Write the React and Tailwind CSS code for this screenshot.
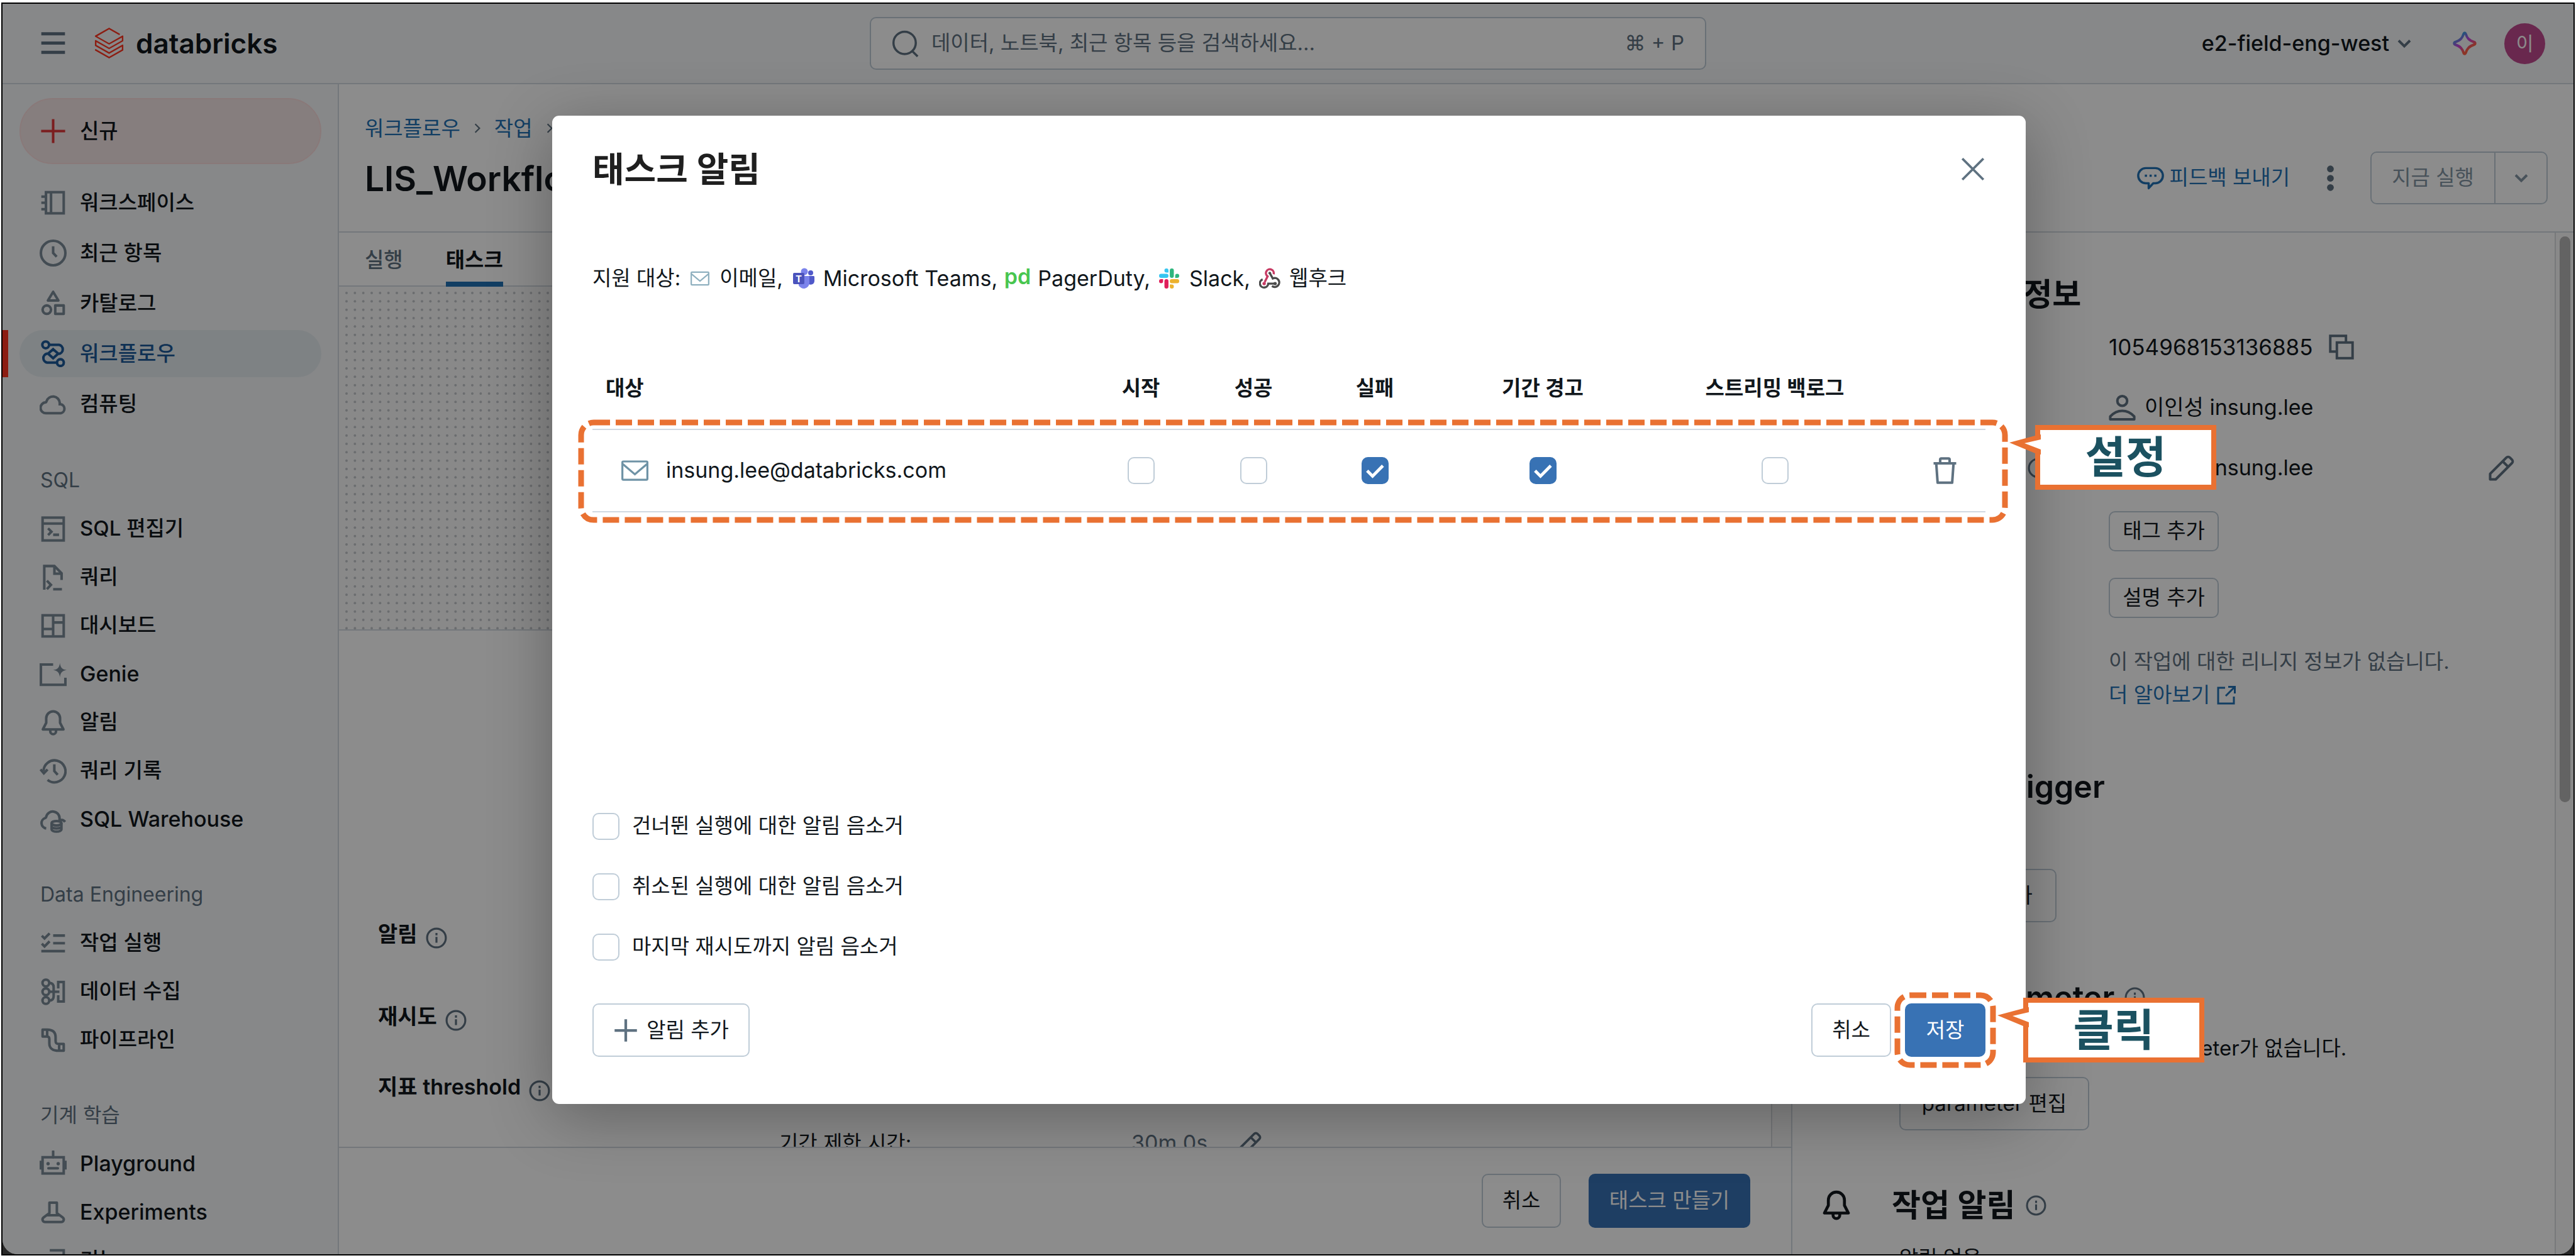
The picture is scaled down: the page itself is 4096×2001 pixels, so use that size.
import React from "react";

function Icon({ children, className = "size-[43px]", strokeWidth = 1.5 }) {
  return (
    <svg
      viewBox="0 0 16 16"
      fill="none"
      stroke="currentColor"
      strokeWidth={strokeWidth}
      aria-hidden="true"
      className={"shrink-0 " + className}
    >
      {children}
    </svg>
  );
}

const glyphs = {
  workspace: (
    <>
      <rect x="3.75" y="1.75" width="10.5" height="12.5" />
      <path d="M6.75 2v12M1 4.4h2.75M1 8h2.75M1 11.8h2.75" />
    </>
  ),
  recents: (
    <>
      <circle cx="8" cy="8" r="7.25" />
      <path d="M8 4v4l2.1 2.2" />
    </>
  ),
  catalog: (
    <g strokeLinejoin="round">
      <path d="M8 1.2 4.9 6.3h6.2z" />
      <circle cx="4.25" cy="11.75" r="2.5" />
      <rect x="9.25" y="9.25" width="5" height="5" />
    </g>
  ),
  workflows: (
    <>
      <circle cx="3.6" cy="2.8" r="2" />
      <circle cx="12.3" cy="13.3" r="2" />
      <path d="M5.6 2.8h5.9a2.7 2.7 0 0 1 0 5.3h-.8M10.3 13.3H4.4a2.7 2.7 0 0 1 0-5.3h.9M8 5.4 11 8l-3 2.7L5 8z" />
    </>
  ),
  compute: (
    <path d="M4 13.5a3.2 3.2 0 0 1-.5-6.4 1 1 0 0 0 .6-.7 4 4 0 0 1 7.8.9v.9h.6a2.7 2.7 0 0 1 0 5.3z" />
  ),
  sqlEditor: (
    <>
      <rect x="1.75" y="1.25" width="12.5" height="13.5" />
      <path d="M2 4.75h12M5 7.6l2 2-2 2M8 11.4h3.5" />
    </>
  ),
  query: <path d="M2.75 15.3V1.25h6L13 5.5v4M8.75 1.5v4.25H13M4.3 9.9l2.4 2.5-2.4 2.5M8 15h5.2" />,
  dashboard: (
    <>
      <rect x="1.75" y="1.75" width="12.5" height="12.5" />
      <path d="M8 2v12M8 6h6M2 9.9h6" />
    </>
  ),
  genie: (
    <>
      <path d="M8 2.25H.75v12h14.5V10" />
      <path
        d="M12 1.3c.3 2.6 1.3 3.9 4 4.2-2.7.3-3.7 1.7-4 4.3-.3-2.6-1.3-4-4-4.3 2.7-.3 3.7-1.6 4-4.2z"
        fill="currentColor"
        stroke="none"
      />
    </>
  ),
  bell: (
    <path
      d="M8 1.3a4.1 4.1 0 0 0-4.1 4.1v2.7L1.9 12h12.2l-2-3.9V5.4A4.1 4.1 0 0 0 8 1.3zM6.3 12.2v.9a1.7 1.7 0 0 0 3.4 0v-.9"
      strokeLinejoin="round"
    />
  ),
  history: (
    <>
      <path d="M2.3 8a6.5 6.5 0 1 1 2.4 5.2" />
      <path d="M.5 7 2.5 9.3 4.7 7M8.7 4v4l2 2.2" />
    </>
  ),
  warehouse: (
    <>
      <path d="M3.9 13.3a3.2 3.2 0 0 1-.6-6.2 1 1 0 0 0 .6-.7 4 4 0 0 1 7.9.9v.9c1.5-.2 2.6.2 3.3 1.2" />
      <ellipse cx="10" cy="10.2" rx="2.9" ry="1.3" />
      <path d="M7.1 10.2v3.6c0 .8 1.2 1.4 2.9 1.4s2.9-.6 2.9-1.4v-3.6M7.1 12.3c.4.7 1.5 1 2.9 1s2.5-.3 2.9-1" />
    </>
  ),
  jobRuns: <path d="M1.3 3.5 2.9 5.1 5.9 2.1M1.3 8.2l1.6 1.6 3-3M8 3.4h7M8 7.9h7M1 12.6h14" />,
  ingestion: (
    <>
      <circle cx="3.7" cy="2.8" r="2" />
      <circle cx="3.7" cy="8" r="2" />
      <circle cx="3.7" cy="13.2" r="2" />
      <path d="M5.7 2.8c2 0 2.6 1 2.6 2.6v5.2c0 1.6-.6 2.6-2.6 2.6M5.7 8h6M11 6V2.25h3.25v11.5H11V10" />
    </>
  ),
  pipelines: (
    <path
      d="M1.75 1.75v4.1h2.7v-4.1zM4.45 1.75c3.4 0 5 1.5 5 4.5V8.500c0 1.2.5 1.75 2 1.75M4.45 5.85c.9 0 1.3.5 1.3 1.5v2.4c0 3 1.7 4.5 5.8 4.5M11.55 10.25h2.7v4h-2.7z"
      strokeLinejoin="round"
    />
  ),
  playground: (
    <>
      <rect x="1.75" y="4" width="12.5" height="9.6" />
      <path d="M8 .5V4M5.2 10.5h5.6" strokeLinecap="round" />
      <path d="M.5 6v5.3M15.5 6v5.3" strokeWidth="1.2" />
      <circle cx="5" cy="7.8" r="1" fill="currentColor" stroke="none" />
      <circle cx="11" cy="7.8" r="1" fill="currentColor" stroke="none" />
    </>
  ),
  experiments: (
    <path
      d="M5.8 2.2h4.4v6.2l3.4 2.5c1.3 1 .6 2.8-.9 2.8H3.3c-1.5 0-2.2-1.8-.9-2.8l3.4-2.5zM4.5 9.7h7"
      strokeLinejoin="round"
    />
  ),
  features: <path d="M6 1.75h8.25v9M1.75 5h9v9.25h-9z" />,
  plus: <path d="M8 .9v14.2M.9 8h14.2" />,
  menu: <path d="M1 2.5h14M1 8h14M1 13.5h14" />,
  search: (
    <>
      <circle cx="7.6" cy="7.5" r="6.6" />
      <path d="m11.9 12.2 3.4 3.3" />
    </>
  ),
  chevronDown: <path d="m2 5 6 6 6-6" strokeWidth="2.6" />,
  chevronRight: <path d="m5 2 6 6-6 6" strokeWidth="2" />,
  info: (
    <>
      <circle cx="8" cy="8" r="7" />
      <path d="M8 7.2v4.3M8 4.2V6" />
    </>
  ),
  pencil: (
    <path
      d="M1.3 14.7v-3.3L10.9 1.8a1.5 1.5 0 0 1 2.1 0l1.2 1.2a1.5 1.5 0 0 1 0 2.1l-9.6 9.6zM8.7 4l3.3 3.3"
      strokeLinejoin="round"
    />
  ),
  copy: (
    <>
      <path d="M5.5 10.75H1.25v-9.5h9.5V5" />
      <rect x="5.25" y="5.25" width="9.5" height="9.5" />
    </>
  ),
  user: (
    <>
      <circle cx="8" cy="4" r="2.9" />
      <path d="M.9 14.9v-1.7c4.2-4.4 10-4.4 14.2 0v1.7z" strokeLinejoin="round" />
    </>
  ),
  external: <path d="M7 2H1.5v12.5H14V9M9.5 1.25h5.25V6.5M14.5 1.5l-7 7" />,
  close: <path d="m1.3 1.3 13.4 13.4M14.7 1.3 1.3 14.7" />,
  trash: (
    <path
      d="M1.3 3.75h13.4M5.2 3.5v-2c0-.4.3-.7.7-.7h4.2c.4 0 .7.3.7.7v2M2.9 4l.8 11.2h8.6L13.1 4"
      strokeLinejoin="round"
    />
  ),
  comment: (
    <>
      <path
        d="M5.2 2h5.6a4.5 4.5 0 0 1 0 9H9.6l-2.7 2.9V11H5.2a4.5 4.5 0 0 1 0-9z"
        strokeLinejoin="round"
      />
      <path d="M4.6 6.5h1.3M7.4 6.5h1.3M10.2 6.5h1.3" />
    </>
  ),
  mail: (
    <>
      <rect x=".6" y="2.6" width="14.8" height="10.8" rx=".6" />
      <path d="m.9 4.2 7.1 6 7.1-6" />
    </>
  ),
};

const primaryNav = [
  ["workspace", "워크스페이스"],
  ["recents", "최근 항목"],
  ["catalog", "카탈로그"],
  ["workflows", "워크플로우"],
  ["compute", "컴퓨팅"],
];

const navSections = [
  {
    title: "SQL",
    items: [
      ["sqlEditor", "SQL 편집기"],
      ["query", "쿼리"],
      ["dashboard", "대시보드"],
      ["genie", "Genie"],
      ["bell", "알림"],
      ["history", "쿼리 기록"],
      ["warehouse", "SQL Warehouse"],
    ],
  },
  {
    title: "Data Engineering",
    items: [
      ["jobRuns", "작업 실행"],
      ["ingestion", "데이터 수집"],
      ["pipelines", "파이프라인"],
    ],
  },
  {
    title: "기계 학습",
    items: [
      ["playground", "Playground"],
      ["experiments", "Experiments"],
      ["features", "기능"],
    ],
  },
];

const isLatin = (label) => /^[\x20-\x7e]+$/.test(label);

function Header() {
  return (
    <header className="flex h-[128px] shrink-0 items-center justify-between border-b-2 border-[#d1d9e1] bg-[#f6f7f9] px-[45px]">
      <div className="flex flex-1 items-center">
        <button type="button" aria-label="메뉴" className="ml-[14px] text-[#5f7281]">
          <Icon className="size-[43px]" strokeWidth={1.8}>{glyphs.menu}</Icon>
        </button>
        <a href="#home" className="ml-[43px] flex items-center gap-[18px]">
          <svg viewBox="0 0 24 24" className="size-[49px]" fill="#ff3621" aria-hidden="true">
            <path d="M.95 14.184L12 20.403l9.919-5.55v2.21L12 22.662l-10.484-5.96-.565.308v.77L12 24l11.05-6.218v-4.317l-.515-.309L12 19.118l-9.867-5.653v-2.21L12 16.805l11.05-6.218V6.32l-.515-.308L12 11.974 2.647 6.681 12 1.388l7.76 4.368.668-.411v-.566L12 0 .95 6.27v.72L12 13.207l9.919-5.55v2.26L12 15.52 1.516 9.56l-.565.308z" />
          </svg>
          <span className="text-[44px] font-semibold text-[#11171c]">databricks</span>
        </a>
      </div>
      <label className="flex h-[84px] w-[1330px] items-center rounded-[10px] border-2 border-[#c0cdd8] bg-white px-[33px] text-[#5f7281]">
        <Icon className="size-[43px]" strokeWidth={1.3}>{glyphs.search}</Icon>
        <input
          type="search"
          aria-label="검색"
          placeholder="데이터, 노트북, 최근 항목 등을 검색하세요..."
          className="ml-[20px] min-w-0 flex-1 bg-transparent text-[33px] outline-none placeholder:text-[#5f7281]"
        />
        <span className="text-[33px]">⌘ + P</span>
      </label>
      <div className="flex flex-1 items-center justify-end">
        <button type="button" className="flex items-center gap-[12px] text-[34px] font-medium text-[#11171c]">
          e2-field-eng-west
          <span className="text-[#5f7281]">
            <Icon className="size-[24px]">{glyphs.chevronDown}</Icon>
          </span>
        </button>
        <button type="button" aria-label="어시스턴트" className="ml-[64px]">
          <svg viewBox="0 0 16 16" className="size-[40px]" fill="none" aria-hidden="true">
            <defs>
              <linearGradient id="spark" x1="4" y1="2" x2="12" y2="14" gradientUnits="userSpaceOnUse">
                <stop offset="0.1" stopColor="#4299e0" />
                <stop offset="0.45" stopColor="#ca42e0" />
                <stop offset="0.8" stopColor="#ff5f46" />
              </linearGradient>
            </defs>
            <path
              d="M8 1.3c.3 0 .5.2.7.7.8 2.5 1.8 4 5.3 5.2.9.3.9 1.3 0 1.6-3.5 1.2-4.5 2.7-5.3 5.2-.3.9-1.1.9-1.4 0C6.5 11.5 5.5 10 2 8.8c-.9-.3-.9-1.3 0-1.6C5.5 6 6.5 4.5 7.3 2c.2-.5.4-.7.7-.7z"
              stroke="url(#spark)"
              strokeWidth="1.6"
            />
          </svg>
        </button>
        <button
          type="button"
          aria-label="계정"
          className="ml-[43px] flex size-[65px] items-center justify-center rounded-full bg-[#bf4a8e] text-[30px] text-white"
        >
          이
        </button>
      </div>
    </header>
  );
}

function NavItem({ icon, label, active, tall }) {
  return (
    <li className={"flex pr-[26px] " + (tall ? "h-[75px]" : "h-[72px]")}>
      <span className={"w-[9px] shrink-0 " + (active ? "bg-[#ff3621]" : "")} />
      <a
        href={"#" + icon}
        className={
          "ml-[18px] flex flex-1 items-center gap-[21px] rounded-full pl-[32px] font-medium " +
          (isLatin(label) ? "text-[34px] " : "text-[33px] ") +
          (active ? "bg-[#e6edf1] text-[#1c5a9a]" : "text-[#11171c]")
        }
      >
        <span className={active ? "text-[#1c5a9a]" : "text-[#7b8b98]"}>
          <Icon>{glyphs[icon]}</Icon>
        </span>
        {label}
      </a>
    </li>
  );
}

function Sidebar() {
  return (
    <aside className="w-[535px] shrink-0 overflow-hidden border-r-2 border-[#d1d9e1] bg-[#f6f7f9] pt-[22px]">
      <div className="pr-[26px] pl-[27px]">
        <button
          type="button"
          className="flex h-[105px] w-full items-center gap-[21px] rounded-full border-2 border-[#fadcdc] bg-[#f5e6e6] pl-[30px] text-[33px] font-medium text-[#11171c]"
        >
          <span className="text-[#e0383a]">
            <Icon>{glyphs.plus}</Icon>
          </span>
          신규
        </button>
      </div>
      <ul className="mt-[24px] flex flex-col gap-[5px]">
        {primaryNav.map(([icon, label]) => (
          <NavItem key={icon} icon={icon} label={label} active={icon === "workflows"} tall />
        ))}
      </ul>
      {navSections.map((s) => (
        <section key={s.title} className="mt-[48px]">
          <h2 className="flex h-[72px] items-center pl-[60px] text-[32px] text-[#5f7281]">{s.title}</h2>
          <ul className="mt-[5px] flex flex-col gap-[5px]">
            {s.items.map(([icon, label]) => (
              <NavItem key={icon} icon={icon} label={label} />
            ))}
          </ul>
        </section>
      ))}
    </aside>
  );
}

function TitleBar() {
  return (
    <div className="flex h-[236px] shrink-0 items-center justify-between border-b-2 border-[#d1d9e1] pr-[41px] pl-[41px]">
      <div>
        <nav className="flex items-center gap-[18px] text-[33px] leading-[44px] text-[#2272b4]">
          <a href="#workflows">워크플로우</a>
          <span className="text-[#5f7281]">
            <Icon className="size-[18px]">{glyphs.chevronRight}</Icon>
          </span>
          <a href="#jobs">작업</a>
          <span className="text-[#5f7281]">
            <Icon className="size-[18px]">{glyphs.chevronRight}</Icon>
          </span>
        </nav>
        <h1 className="mt-[22px] text-[55px] leading-[72px] font-semibold text-[#11171c]">LIS_Workflow</h1>
      </div>
      <div className="flex items-center pt-[64px]">
        <a href="#feedback" className="flex items-center gap-[9px] text-[33px] text-[#2272b4]">
          <Icon className="size-[43px]" strokeWidth={1.3}>{glyphs.comment}</Icon>
          피드백 보내기
        </a>
        <button type="button" aria-label="더 보기" className="ml-[43px] text-[#5f7281]">
          <svg viewBox="0 0 16 16" className="size-[43px]" fill="currentColor" aria-hidden="true">
            <circle cx="8" cy="2.5" r="2" />
            <circle cx="8" cy="8" r="2" />
            <circle cx="8" cy="13.5" r="2" />
          </svg>
        </button>
        <div className="ml-[42px] flex h-[84px] rounded-[10px] border-2 border-[#c0cdd8] text-[#8396a5]">
          <button type="button" disabled className="w-[195px] text-[33px]">
            지금 실행
          </button>
          <button
            type="button"
            disabled
            aria-label="실행 옵션"
            className="flex w-[83px] items-center justify-center border-l-2 border-[#c0cdd8]"
          >
            <Icon className="size-[24px]">{glyphs.chevronDown}</Icon>
          </button>
        </div>
      </div>
    </div>
  );
}

const dotOffsets = [0, 1, 2].flatMap((r) => [0, 1, 2].map((c) => [7 + c * 13.33, 7 + r * 13.33]));

function DagCanvas() {
  return (
    <div className="h-[547px] shrink-0 border-b-2 border-[#d1d9e1] bg-[#fafafa] pt-[3px] pl-[5px]">
      <svg className="h-full w-full" aria-hidden="true">
        <defs>
          <pattern id="grid-dots" width="40" height="40" patternUnits="userSpaceOnUse">
            {dotOffsets.map(([x, y]) => (
              <circle key={x + "-" + y} cx={x} cy={y} r="2" fill="#c3c6cb" />
            ))}
          </pattern>
        </defs>
        <rect width="100%" height="100%" fill="url(#grid-dots)" />
      </svg>
    </div>
  );
}

function FieldLabel({ children }) {
  return (
    <div className="flex w-[640px] shrink-0 items-center gap-[13px] text-[34px] font-semibold text-[#11171c]">
      {children}
      <span className="mt-[10px] text-[#5f7281]">
        <Icon className="size-[34px]">{glyphs.info}</Icon>
      </span>
    </div>
  );
}

function OutlineButton({ children, className = "" }) {
  return (
    <button
      type="button"
      className={
        "flex items-center justify-center rounded-[10px] border-2 border-[#c0cdd8] text-[33px] text-[#11171c] " +
        className
      }
    >
      {children}
    </button>
  );
}

function TaskPane() {
  return (
    <div className="flex min-w-0 flex-1 flex-col">
      <div className="flex h-[86px] shrink-0 gap-[68px] border-b-2 border-[#d1d9e1] pl-[41px] text-[33px] leading-[44px]">
        <a href="#runs" className="pt-[21px] font-medium text-[#5f7281]">
          실행
        </a>
        <a href="#tasks" className="-mb-[2px] border-b-8 border-[#2272b4] pt-[21px] font-semibold text-[#11171c]">
          태스크
        </a>
      </div>
      <DagCanvas />
      <div className="flex min-h-0 flex-1 overflow-hidden">
        <div className="flex-1 pt-[418px] pl-[62px] text-[33px]">
          <div className="flex h-[131px] items-center">
            <FieldLabel>알림</FieldLabel>
          </div>
          <div className="flex h-[131px] items-center">
            <FieldLabel>재시도</FieldLabel>
          </div>
          <div className="flex h-[93px] items-center">
            <FieldLabel>지표 threshold</FieldLabel>
          </div>
          <div className="flex h-[85px] items-center">
            <span className="ml-[638px] w-[560px] text-[#11171c]">기간 제한 시간:</span>
            <span className="w-[168px] text-[34px] text-[#5f7281]">30m 0s</span>
            <button type="button" aria-label="기간 편집" className="text-[#5f7281]">
              <Icon className="size-[40px]">{glyphs.pencil}</Icon>
            </button>
          </div>
        </div>
        <div className="w-[32px] border-l-2 border-[#d9dde1] bg-[#fafafa]" />
      </div>
      <div className="flex h-[171px] shrink-0 items-start justify-end gap-[44px] border-t-2 border-[#d1d9e1] pt-[41px] pr-[65px]">
        <OutlineButton className="h-[86px] w-[126px]">취소</OutlineButton>
        <button type="button" className="h-[86px] w-[257px] rounded-[10px] bg-[#3872b4] text-[33px] text-white">
          태스크 만들기
        </button>
      </div>
    </div>
  );
}

function DetailRow({ label, children, className = "h-[96px] items-center" }) {
  return (
    <div className={"flex " + className}>
      <div className="flex w-[333px] shrink-0 items-center gap-[13px]">{label}</div>
      <div className="flex flex-1 items-center">{children}</div>
    </div>
  );
}

function Section({ icon, title, info, children }) {
  return (
    <section className="flex">
      <span className="flex h-[72px] w-[113px] shrink-0 items-center text-[#11171c]">
        <Icon className="size-[50px]">{glyphs[icon]}</Icon>
      </span>
      <div className="flex-1">
        <h2 className="flex h-[72px] items-center gap-[16px] text-[50px] font-semibold text-[#11171c]">
          {title}
          {info && (
            <span className="text-[#5f7281]">
              <Icon className="size-[33px]">{glyphs.info}</Icon>
            </span>
          )}
        </h2>
        <div className="pl-[12px]">{children}</div>
      </div>
    </section>
  );
}

function JobPanel() {
  return (
    <div className="flex w-[1244px] shrink-0 overflow-hidden border-l-2 border-[#d1d9e1] text-[33px] text-[#11171c]">
      <div className="flex flex-1 flex-col gap-[83px] pt-[62px] pl-[45px]">
        <Section icon="recents" title="작업 세부 정보">
          <DetailRow label="작업 ID">
            <span className="text-[35px]">1054968153136885</span>
            <button type="button" aria-label="복사" className="ml-[24px] text-[#5f7281]">
              <Icon className="size-[42px]">{glyphs.copy}</Icon>
            </button>
          </DetailRow>
          <DetailRow label="생성자">
            <span className="text-[#5f7281]">
              <Icon>{glyphs.user}</Icon>
            </span>
            <span className="ml-[14px] text-[34px]">이인성 insung.lee</span>
          </DetailRow>
          <DetailRow
            label={
              <>
                다음으로 실행
                <span className="text-[#5f7281]">
                  <Icon className="size-[33px]">{glyphs.info}</Icon>
                </span>
              </>
            }
          >
            <span className="text-[#5f7281]">
              <Icon>{glyphs.user}</Icon>
            </span>
            <span className="ml-[14px] flex-1 text-[34px]">이인성 insung.lee</span>
            <button type="button" aria-label="실행 계정 편집" className="mr-[63px] text-[#5f7281]">
              <Icon>{glyphs.pencil}</Icon>
            </button>
          </DetailRow>
          <DetailRow label="태그" className="h-[106px] items-center">
            <OutlineButton className="h-[64px] w-[175px]">태그 추가</OutlineButton>
          </DetailRow>
          <DetailRow label="설명" className="h-[106px] items-center">
            <OutlineButton className="h-[64px] w-[175px]">설명 추가</OutlineButton>
          </DetailRow>
          <DetailRow label="리니지" className="items-start pt-[22px] leading-[53px]">
            <p className="text-[#5f7281]">
              이 작업에 대한 리니지 정보가 없습니다.
              <br />
              <a href="#lineage" className="flex items-center gap-[10px] text-[#2272b4]">
                더 알아보기
                <Icon className="size-[32px]">{glyphs.external}</Icon>
              </a>
            </p>
          </DetailRow>
        </Section>
        <Section icon="history" title="일정 및 Trigger">
          <OutlineButton className="mt-[95px] h-[85px] w-[250px]">trigger 추가</OutlineButton>
        </Section>
        <Section icon="sqlEditor" title="작업 parameter" info>
          <p className="mt-[19px] leading-[53px]">이 작업에 대해 정의된 작업 parameter가 없습니다.</p>
          <OutlineButton className="mt-[19px] h-[85px] w-[302px]">parameter 편집</OutlineButton>
        </Section>
        <Section icon="bell" title="작업 알림" info>
          <p className="mt-[22px] leading-[53px]">알림 없음</p>
        </Section>
      </div>
      <div className="flex w-[30px] justify-center border-l-2 border-[#d9dde1] bg-[#fafafa] pt-[6px]">
        <div className="h-[900px] w-[17px] rounded-full bg-[#b4b4b4]" />
      </div>
    </div>
  );
}

function Checkbox({ label, defaultChecked }) {
  return (
    <span className="inline-grid size-[43px] place-items-center">
      <input
        type="checkbox"
        aria-label={label}
        defaultChecked={defaultChecked}
        className="peer col-start-1 row-start-1 size-[43px] appearance-none rounded-[10px] border-2 border-[#c0cdd8] bg-white checked:border-[#3872b4] checked:bg-[#3872b4]"
      />
      <svg
        viewBox="0 0 16 16"
        fill="none"
        stroke="white"
        strokeWidth="1.8"
        aria-hidden="true"
        className="pointer-events-none col-start-1 row-start-1 hidden size-[43px] peer-checked:block"
      >
        <path d="m3.3 8.1 3.2 3.2 6.1-6.2" />
      </svg>
    </span>
  );
}

function DashedFrame({ className, callout }) {
  return (
    <div className={"pointer-events-none absolute " + className}>
      <svg className="h-full w-full overflow-visible" aria-hidden="true">
        <rect
          x="0"
          y="0"
          width="100%"
          height="100%"
          rx="20"
          fill="none"
          stroke="#e97132"
          strokeWidth="9"
          strokeDasharray="26 9"
        />
      </svg>
      <div className="absolute top-[4px] left-full ml-[48px] flex h-[103px] w-[288px] items-center justify-center border-8 border-[#e97132] bg-white text-[70px] leading-none font-bold text-[#1b5160]">
        {callout}
        <svg viewBox="0 0 50 48" className="absolute top-0 -left-[49px] h-[48px] w-[50px]" aria-hidden="true">
          <path d="M50 7 41 9 0 20l41 17 9 2z" fill="#e97132" />
          <path d="M50 15 24 21l26 10z" fill="white" />
        </svg>
      </div>
    </div>
  );
}

function TeamsIcon() {
  return (
    <svg viewBox="0 0 34 34" className="size-[34px]" aria-hidden="true">
      <circle cx="28" cy="8" r="4" fill="#5059c9" />
      <path d="M23 13h9.5c.8 0 1.5.7 1.5 1.5V21a6 6 0 0 1-9 5z" fill="#5059c9" />
      <circle cx="18" cy="6" r="5.5" fill="#7b83eb" />
      <path d="M9 13h15.5c.8 0 1.5.7 1.5 1.5V24a9 9 0 0 1-17 4z" fill="#7b83eb" />
      <rect x="0" y="8" width="18" height="18" rx="2" fill="#4b53bc" />
      <text x="9" y="22.5" textAnchor="middle" fontSize="15" fontWeight="700" fontFamily="Inter" fill="white">
        T
      </text>
    </svg>
  );
}

function SlackIcon() {
  return (
    <svg viewBox="0 0 24 24" className="size-[32px]" aria-hidden="true">
      <path d="M8.8 0a2.4 2.4 0 1 0 0 4.8h2.4V2.4A2.4 2.4 0 0 0 8.8 0zM2.4 6.4h6.4a2.4 2.4 0 1 1 0 4.8H2.4a2.4 2.4 0 0 1 0-4.8z" fill="#36c5f0" />
      <path d="M24 8.8a2.4 2.4 0 1 0-4.8 0v2.4h2.4A2.4 2.4 0 0 0 24 8.8zM12.8 2.4a2.4 2.4 0 0 1 4.8 0v6.4a2.4 2.4 0 1 1-4.8 0z" fill="#2eb67d" />
      <path d="M15.2 24a2.4 2.4 0 1 0 0-4.8h-2.4v2.4a2.4 2.4 0 0 0 2.4 2.4zM15.2 12.8h6.4a2.4 2.4 0 0 1 0 4.8h-6.4a2.4 2.4 0 1 1 0-4.8z" fill="#ecb22e" />
      <path d="M0 15.2a2.4 2.4 0 1 0 4.8 0v-2.4H2.4A2.4 2.4 0 0 0 0 15.2zM6.4 15.2a2.4 2.4 0 1 1 4.8 0v6.4a2.4 2.4 0 1 1-4.8 0z" fill="#e01e5a" />
    </svg>
  );
}

function WebhookIcon() {
  return (
    <svg viewBox="0 0 24 24" className="size-[34px]" fill="none" strokeWidth="2.4" aria-hidden="true">
      <path d="M16.3 7.3A4.4 4.4 0 1 0 9.6 9.6L6.3 16" stroke="#c73a63" />
      <circle cx="5.7" cy="17.7" r="1.9" fill="#c73a63" />
      <path d="M12 5.8 15.4 12a5 5 0 1 1-.9 8.4" stroke="#4b4b4b" />
      <circle cx="12" cy="5.9" r="1.5" fill="#4b4b4b" />
      <path d="M4 13a4.7 4.7 0 1 0 6.3 4.7h7.5" stroke="#4b4b4b" />
      <circle cx="18" cy="17.7" r="1.9" fill="#4b4b4b" />
    </svg>
  );
}

function Modal() {
  return (
    <div className="absolute inset-0 z-10 flex items-start justify-center bg-black/45 pt-[178px] pl-[3px]">
      <div
        role="dialog"
        aria-label="태스크 알림"
        className="flex w-full max-w-[2343px] flex-col rounded-[11px] bg-white px-[64px] pt-[49px] pb-[75px] text-[33px] text-[#11171c] shadow-[0_20px_100px_rgba(0,0,0,0.3)]"
      >
        <div className="flex h-[72px] items-center justify-between">
          <h2 className="text-[55px] font-semibold text-[#1f1f1f]">태스크 알림</h2>
          <button type="button" aria-label="닫기" className="text-[#5f7281]">
            <Icon className="size-[40px]">{glyphs.close}</Icon>
          </button>
        </div>

        <div className="mt-[114px] flex h-[48px] items-center">
          <span>지원 대상:</span>
          <span className="ml-[16px] text-[#8fb0bf]">
            <Icon className="size-[30px]" strokeWidth={1.2}>{glyphs.mail}</Icon>
          </span>
          <span className="ml-[16px]">이메일,</span>
          <span className="ml-[16px]">
            <TeamsIcon />
          </span>
          <span className="ml-[14px] text-[34px]">Microsoft Teams,</span>
          <svg viewBox="0 0 40 40" className="ml-[12px] size-[40px]" aria-hidden="true">
            <text x="20" y="29" textAnchor="middle" fontSize="34" fontWeight="600" fontFamily="Inter" fill="#48c64f">
              pd
            </text>
          </svg>
          <span className="ml-[12px] text-[34px]">PagerDuty,</span>
          <span className="ml-[14px]">
            <SlackIcon />
          </span>
          <span className="ml-[16px] text-[34px]">Slack,</span>
          <span className="ml-[14px]">
            <WebhookIcon />
          </span>
          <span className="ml-[14px]">웹후크</span>
        </div>

        <div className="relative mt-[112px]">
          <table className="w-full table-fixed border-collapse">
            <colgroup>
              <col />
              <col className="w-[180px]" />
              <col className="w-[178px]" />
              <col className="w-[208px]" />
              <col className="w-[326px]" />
              <col className="w-[412px]" />
              <col className="w-[129px]" />
            </colgroup>
            <thead>
              <tr className="h-[104px] border-b-2 border-[#d1d9e1] align-top leading-[76px]">
                <th scope="col" className="pl-[21px] text-left font-semibold">대상</th>
                <th scope="col" className="text-center font-semibold">시작</th>
                <th scope="col" className="text-center font-semibold">성공</th>
                <th scope="col" className="text-center font-semibold">실패</th>
                <th scope="col" className="text-center font-semibold">기간 경고</th>
                <th scope="col" className="text-center font-semibold">스트리밍 백로그</th>
                <th scope="col" aria-label="삭제" />
              </tr>
            </thead>
            <tbody>
              <tr className="h-[131px] border-b-2 border-[#d1d9e1]">
                <td>
                  <div className="flex items-center gap-[28px] pl-[46px]">
                    <span className="text-[#6f93a6]">
                      <Icon strokeWidth={1.2}>{glyphs.mail}</Icon>
                    </span>
                    <span className="text-[34px]">insung.lee@databricks.com</span>
                  </div>
                </td>
                {[
                  ["시작", false],
                  ["성공", false],
                  ["실패", true],
                  ["기간 경고", true],
                  ["스트리밍 백로그", false],
                ].map(([name, on]) => (
                  <td key={name}>
                    <div className="flex justify-center">
                      <Checkbox label={name} defaultChecked={on} />
                    </div>
                  </td>
                ))}
                <td>
                  <div className="flex justify-center text-[#5f7281]">
                    <button type="button" aria-label="삭제">
                      <Icon>{glyphs.trash}</Icon>
                    </button>
                  </div>
                </td>
              </tr>
            </tbody>
          </table>
          <DashedFrame className="-right-[31px] -bottom-[12px] -left-[18px] h-[155px]" callout="설정" />
        </div>

        <div className="mt-[451px] flex flex-col">
          {["건너뛴 실행에 대한 알림 음소거", "취소된 실행에 대한 알림 음소거", "마지막 재시도까지 알림 음소거"].map((t) => (
            <label key={t} className="flex h-[96px] items-center gap-[20px]">
              <Checkbox label={t} />
              {t}
            </label>
          ))}
        </div>

        <div className="mt-[42px] flex items-center justify-between">
          <OutlineButton className="h-[85px] w-[250px] gap-[13px]">
            <span className="text-[#5f7281]">
              <Icon className="size-[40px]" strokeWidth={1.7}>{glyphs.plus}</Icon>
            </span>
            알림 추가
          </OutlineButton>
          <div className="flex gap-[22px]">
            <OutlineButton className="h-[85px] w-[127px]">취소</OutlineButton>
            <div className="relative">
              <button type="button" className="h-[85px] w-[128px] rounded-[10px] bg-[#3872b4] text-[33px] text-white">
                저장
              </button>
              <DashedFrame className="-inset-x-[12px] -inset-y-[13px]" callout="클릭" />
            </div>
          </div>
        </div>
      </div>
    </div>
  );
}

export default function App() {
  return (
    <div className="h-screen bg-white px-[2px] py-[4px] font-['Inter','Noto_Sans_CJK_KR',sans-serif] leading-[1.2]">
      <div className="relative flex h-full flex-col border-2 border-black bg-[#484848]">
        <div className="flex min-h-0 flex-1 flex-col overflow-hidden rounded-b-[24px] bg-white">
          <Header />
          <div className="flex min-h-0 flex-1">
            <Sidebar />
            <div className="flex min-w-0 flex-1 flex-col">
              <TitleBar />
              <div className="flex min-h-0 flex-1">
                <TaskPane />
                <JobPanel />
              </div>
            </div>
          </div>
        </div>
        <Modal />
      </div>
    </div>
  );
}
